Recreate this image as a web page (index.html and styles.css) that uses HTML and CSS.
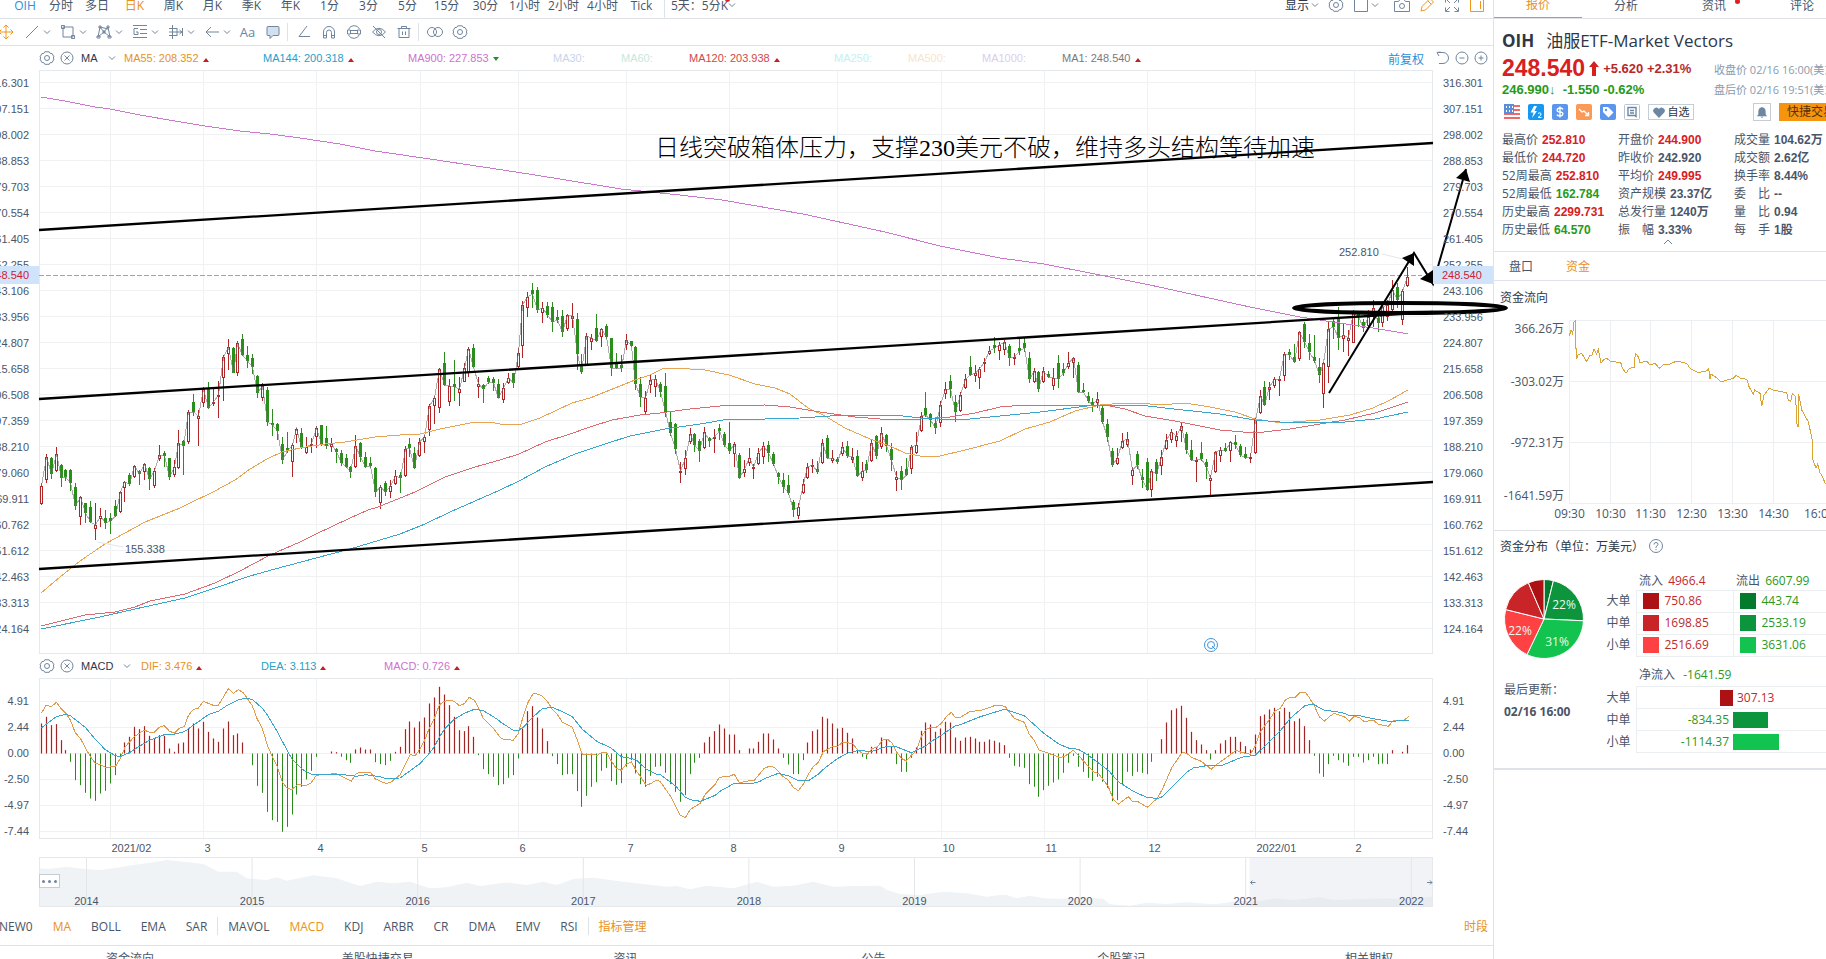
FILE: index.html
```html
<!DOCTYPE html>
<html lang="zh-CN">
<head>
    <meta charset="UTF-8">
    <meta name="viewport" content="width=device-width, initial-scale=1.0">
    <title>OIH 油服ETF-Market Vectors</title>
    <link rel="stylesheet" href="styles.css">
</head>
<body>
    <!-- shared icons -->
    <svg class="sprite" aria-hidden="true">
        <symbol id="i-chev" viewBox="0 0 8 8"><path d="M1 2.5l3 3 3-3"/></symbol>
        <symbol id="i-gear" viewBox="0 0 16 16"><path d="M5.8 1.8h4.4l1 1.6 1.9.2 1.9 3.3-.8 1.1.8 1.1-1.9 3.4-1.9.2-1 1.6H5.8l-1-1.6-1.9-.2L1 9.100l.8-1.100L1 6.900l1.900-3.300 1.900-.2z"/><circle cx="8" cy="8" r="2.500"/></symbol>
        <symbol id="i-close" viewBox="0 0 16 16"><circle cx="8" cy="8" r="6"/><path d="M5.500 5.500l5 5m0-5l-5 5"/></symbol>
        <symbol id="i-move" viewBox="0 0 16 16"><path d="M8 1v14M1 8h14M5.500 3.500L8 1l2.500 2.500M5.500 12.500L8 15l2.500-2.500M3.500 5.500L1 8l2.500 2.500M12.500 5.500L15 8l-2.500 2.500"/></symbol>
        <symbol id="i-line" viewBox="0 0 16 16"><path d="M2 14L14 2"/></symbol>
        <symbol id="i-rect" viewBox="0 0 16 16"><path d="M3 3h10v10H3zM1.500 1.500h3v3h-3zM11.500 11.500h3v3h-3z"/></symbol>
        <symbol id="i-pattern" viewBox="0 0 16 16"><path d="M2 13L4 3l4 5 4-5 2 10-6-5zM4 3l8 2M1 12h3v2H1zM12 12h3v2h-3zM3 2h2v2H3zM11 2h2v2h-2zM7 7h2v2H7z"/></symbol>
        <symbol id="i-fib" viewBox="0 0 16 16"><path d="M1 1.500h14M8 5.500h7M8 9.500h7M1 13.500h14M6 4.500H2v6h4V8H4"/></symbol>
        <symbol id="i-measure" viewBox="0 0 16 16"><path d="M4.500 1v14M1 4.500h8M1 11.500h8M14.500 4v8M1 8h13M11.500 6l2.500 2-2.500 2M9 4v8"/></symbol>
        <symbol id="i-arrow" viewBox="0 0 16 16"><path d="M15 8H2M7 3L2 8l5 5"/></symbol>
        <symbol id="i-note" viewBox="0 0 16 16"><path class="tint" d="M3 2.500h10q1 0 1 1v7q0 1-1 1H8l-3 3v-3H3q-1 0-1-1v-7q0-1 1-1z"/></symbol>
        <symbol id="i-angle" viewBox="0 0 16 16"><path d="M11 2L3 12.500h11"/></symbol>
        <symbol id="i-magnet" viewBox="0 0 16 16"><path d="M2.500 14V8a5.500 5.500 0 0111 0v6h-3V8.500a2.500 2.500 0 00-5 0V14zM2.500 11.500h3M10.500 11.500h3"/></symbol>
        <symbol id="i-sync" viewBox="0 0 16 16"><path d="M2.500 5.500A6 6 0 0113.500 5M13.500 10.500A6 6 0 012.500 11M5 6.500h6M5 9.500h6M1.500 6h3v4h-3zM11.500 6h3v4h-3z"/></symbol>
        <symbol id="i-hide" viewBox="0 0 16 16"><path d="M1.500 8Q8 .5 14.500 8 8 15.500 1.500 8zM2 2l12 12"/><circle cx="8" cy="8" r="2.500"/></symbol>
        <symbol id="i-trash" viewBox="0 0 16 16"><path d="M1.500 4.500h13M5.500 4.500v-2h5v2M3 4.500v9h10v-9M6.500 7.500v3.500M9.500 7.500v3.500"/></symbol>
        <symbol id="i-rings" viewBox="0 0 16 16"><circle cx="5" cy="8" r="4.500"/><circle cx="11" cy="8" r="4.500"/></symbol>
        <symbol id="i-square" viewBox="0 0 16 16"><path d="M1.500 1.500h13v13h-13z"/></symbol>
        <symbol id="i-camera" viewBox="0 0 16 16"><path d="M.5 4.500h4l1.500-2h4l1.500 2h4v10H.5z"/><circle cx="8" cy="9" r="2.500"/></symbol>
        <symbol id="i-pen" viewBox="0 0 16 16"><path d="M2 14l1-4.500L11 1.500l3.500 3.500-8 8zM9 4l3 3"/></symbol>
        <symbol id="i-full" viewBox="0 0 16 16"><path d="M1.500 5.500v-4h4M10.500 1.500h4v4M14.500 10.500v4h-4M5.500 14.500h-4v-4M2 2l4 4M14 2l-4 4M14 14l-4-4M2 14l4-4"/></symbol>
        <symbol id="i-side" viewBox="0 0 16 16"><path d="M1.500 1.500h13v13h-13zM11.500 4v8"/></symbol>
        <symbol id="i-undo" viewBox="0 0 16 16"><path d="M4 6L2 2.500 5.500 2M2.500 2.500H8a5.500 5.500 0 010 11H4"/></symbol>
        <symbol id="i-minus" viewBox="0 0 16 16"><circle cx="8" cy="8" r="6"/><path d="M5.500 8h5"/></symbol>
        <symbol id="i-plus" viewBox="0 0 16 16"><circle cx="8" cy="8" r="6"/><path d="M5.500 8h5M8 5.500v5"/></symbol>
    </svg>

    <div class="layout">
        <main class="main">
            <nav class="period-bar">
                <button class="short symbol">OIH</button>
                <button class="short">分时</button>
                <button class="short">多日</button>
                <button class="active">日K</button>
                <button>周K</button>
                <button>月K</button>
                <button>季K</button>
                <button>年K</button>
                <button>1分</button>
                <button>3分</button>
                <button>5分</button>
                <button>15分</button>
                <button>30分</button>
                <button>1小时</button>
                <button>2小时</button>
                <button>4小时</button>
                <button>Tick</button>
                <span class="sep"></span>
                <button class="custom">5天：5分K<svg class="chev"><use href="#i-chev"/></svg></button>
                <div class="period-tools">
                    <button class="dark">显示<svg class="chev"><use href="#i-chev"/></svg></button>
                    <button aria-label="设置"><svg class="icon"><use href="#i-gear"/></svg></button>
                    <button class="frames" aria-label="布局"><svg class="icon"><use href="#i-square"/></svg><svg class="chev"><use href="#i-chev"/></svg></button>
                    <button aria-label="截图"><svg class="icon"><use href="#i-camera"/></svg></button>
                    <button class="active" aria-label="画线"><svg class="icon"><use href="#i-pen"/></svg></button>
                    <button aria-label="全屏"><svg class="icon"><use href="#i-full"/></svg></button>
                    <button class="active" aria-label="侧栏"><svg class="icon"><use href="#i-side"/></svg></button>
                </div>
            </nav>

            <div class="draw-bar">
                <button class="active" aria-label="移动"><svg class="icon"><use href="#i-move"/></svg></button>
                <button class="drop" aria-label="线段"><svg class="icon"><use href="#i-line"/></svg><svg class="chev"><use href="#i-chev"/></svg></button>
                <button class="drop" aria-label="矩形"><svg class="icon"><use href="#i-rect"/></svg><svg class="chev"><use href="#i-chev"/></svg></button>
                <button class="drop" aria-label="形态"><svg class="icon"><use href="#i-pattern"/></svg><svg class="chev"><use href="#i-chev"/></svg></button>
                <button class="drop" aria-label="江恩"><svg class="icon"><use href="#i-fib"/></svg><svg class="chev"><use href="#i-chev"/></svg></button>
                <button class="drop" aria-label="测量"><svg class="icon"><use href="#i-measure"/></svg><svg class="chev"><use href="#i-chev"/></svg></button>
                <button class="drop" aria-label="箭头"><svg class="icon"><use href="#i-arrow"/></svg><svg class="chev"><use href="#i-chev"/></svg></button>
                <button class="text-tool">Aa</button>
                <button aria-label="注释"><svg class="icon"><use href="#i-note"/></svg></button>
                <span class="sep"></span>
                <button aria-label="角度"><svg class="icon"><use href="#i-angle"/></svg></button>
                <button aria-label="磁铁"><svg class="icon"><use href="#i-magnet"/></svg></button>
                <button aria-label="同步"><svg class="icon"><use href="#i-sync"/></svg></button>
                <button aria-label="隐藏"><svg class="icon"><use href="#i-hide"/></svg></button>
                <button aria-label="删除"><svg class="icon"><use href="#i-trash"/></svg></button>
                <span class="sep"></span>
                <button aria-label="对比"><svg class="icon"><use href="#i-rings"/></svg></button>
                <button aria-label="设置"><svg class="icon"><use href="#i-gear"/></svg></button>
            </div>

            <div class="legend">
                <div class="legend-name">
                    <svg class="icon"><use href="#i-gear"/></svg>
                    <svg class="icon"><use href="#i-close"/></svg>
                    <span>MA</span>
                    <svg class="chev"><use href="#i-chev"/></svg>
                </div>
                <div class="legend-values ma">
                    <span class="c-orange up">MA55: 208.352</span>
                    <span class="c-blue up">MA144: 200.318</span>
                    <span class="c-pink down">MA900: 227.853</span>
                    <span class="c-pale1">MA30:</span>
                    <span class="c-pale2">MA60:</span>
                    <span class="c-red up">MA120: 203.938</span>
                    <span class="c-pale3">MA250:</span>
                    <span class="c-pale4">MA500:</span>
                    <span class="c-pale5">MA1000:</span>
                    <span class="c-grey up">MA1: 248.540</span>
                </div>
                <div class="legend-tools">
                    <a href="#">前复权</a>
                    <svg class="icon"><use href="#i-undo"/></svg>
                    <svg class="icon"><use href="#i-minus"/></svg>
                    <svg class="icon"><use href="#i-plus"/></svg>
                </div>
            </div>

            <div class="chart-row">
                <div class="axis left" id="axisLeft"></div>
                <div class="plot">
                    <svg id="kline" class="kline"></svg>
                    <svg id="notes" class="notes"></svg>
                </div>
                <div class="axis right" id="axisRight"></div>
            </div>

            <div class="legend">
                <div class="legend-name sub">
                    <svg class="icon"><use href="#i-gear"/></svg>
                    <svg class="icon"><use href="#i-close"/></svg>
                    <span>MACD</span>
                    <svg class="chev"><use href="#i-chev"/></svg>
                </div>
                <div class="legend-values macd">
                    <span class="c-orange up">DIF: 3.476</span>
                    <span class="c-blue up">DEA: 3.113</span>
                    <span class="c-pink up">MACD: 0.726</span>
                </div>
            </div>

            <div class="chart-row">
                <div class="axis left macd-axis">
                    <span>4.91</span><span>2.44</span><span>0.00</span><span>-2.50</span><span>-4.97</span><span>-7.44</span>
                </div>
                <div class="plot"><svg id="macd" class="macd-svg"></svg></div>
                <div class="axis right macd-axis">
                    <span>4.91</span><span>2.44</span><span>0.00</span><span>-2.50</span><span>-4.97</span><span>-7.44</span>
                </div>
            </div>

            <div class="chart-row">
                <div class="axis"></div>
                <div class="plot">
                    <svg id="range" class="range"></svg>
                    <button class="more" aria-label="更多"><i></i><i></i><i></i></button>
                </div>
                <div class="axis right"></div>
            </div>

            <nav class="indicator-bar">
                <button>NEW0</button>
                <button class="active">MA</button>
                <button>BOLL</button>
                <button>EMA</button>
                <button>SAR</button>
                <span class="sep"></span>
                <button>MAVOL</button>
                <button class="active">MACD</button>
                <button>KDJ</button>
                <button>ARBR</button>
                <button>CR</button>
                <button>DMA</button>
                <button>EMV</button>
                <button>RSI</button>
                <span class="sep"></span>
                <button class="active">指标管理</button>
                <button class="active last">时段</button>
            </nav>

            <nav class="bottom-bar">
                <button>资金流向</button>
                <button>美股快捷交易</button>
                <button>资讯</button>
                <button>公告</button>
                <button>个股笔记</button>
                <button>相关期权</button>
            </nav>
        </main>

        <aside class="side">
            <nav class="side-tabs">
                <button class="active">报价</button>
                <button>分析</button>
                <button class="dot">资讯</button>
                <button>评论</button>
            </nav>

            <section class="quote">
                <h1><b>OIH</b>油服ETF-Market Vectors</h1>
                <div class="price-row">
                    <div class="price">248.540<svg class="up-arrow" viewBox="0 0 10 15"><path d="M5 0l5 6H7v9H3V6H0z"/></svg><span>+5.620 +2.31%</span></div>
                    <div class="when">收盘价 02/16 16:00(美东)</div>
                </div>
                <div class="price-row after">
                    <div class="after-price">246.990↓&nbsp; -1.550 -0.62%</div>
                    <div class="when">盘后价 02/16 19:51(美东)</div>
                </div>
                <div class="badges">
                    <svg viewBox="0 0 16 16"><path d="M0 1h16v2H0zM0 5h16v2H0zM0 9h16v2H0zM0 13h16v2H0z" fill="#f0686a"/><path d="M0 0h10v10H0z" fill="#5a8fd8"/><path d="M2 2h1v2H2zM5 2h1v2H5zM8 2h1v2H8zM2 6h1v2H2zM5 6h1v2H5zM8 6h1v2H8z" fill="#fff"/></svg>
                    <svg viewBox="0 0 16 16"><rect width="16" height="16" rx="2" fill="#1698f0"/><path d="M6 2L2.500 8.500h3L4 14l5-7H6.500L9 2z" fill="#fff"/><path d="M10 9.500q2-1.500 3 0t-3 4h3.500" fill="none" stroke="#fff"/></svg>
                    <svg viewBox="0 0 16 16"><rect width="16" height="16" rx="2" fill="#5a96ee"/><path d="M11 5.500Q10.500 4 8 4T5.200 6 8 8t2.800 2T8 12 5 10.500M8 2.500v11" fill="none" stroke="#fff" stroke-width="1.400"/></svg>
                    <svg viewBox="0 0 16 16"><rect width="16" height="16" rx="2" fill="#fb9a58"/><path d="M3 5l3 3 2-1 4 4M12.500 8v3.500H9" fill="none" stroke="#fff" stroke-width="1.400"/></svg>
                    <svg viewBox="0 0 16 16"><rect width="16" height="16" rx="2" fill="#5a96ee"/><path d="M3 3h5l5.500 5.500-5 5L3 8z" fill="#fff"/><circle cx="6" cy="6" r="1.200" fill="#5a96ee"/></svg>
                    <svg viewBox="0 0 16 16"><rect x=".5" y=".5" width="15" height="15" rx="1" fill="#fff" stroke="#b9c5d3"/><path d="M4 3.500h8v9l-1.500-1H4zM6 6.500h4M6 9h4" fill="none" stroke="#6b87a3" stroke-width="1.400"/></svg>
                    <button class="fav"><svg viewBox="0 0 12 11"><path d="M6 11L.8 5.600A3 3 0 016 2a3 3 0 015.200 3.600z"/></svg>自选</button>
                    <button class="bell" aria-label="提醒"><svg viewBox="0 0 12 12"><path d="M6 0q4 1 4 5v3l1.500 2H.5L2 8V5q0-4 4-5zM4.500 10.500h3L6 12z"/></svg></button>
                    <button class="trade">快捷交易</button>
                </div>
                <dl class="stats">
                    <div><dt>最高价</dt><dd class="red">252.810</dd></div>
                    <div><dt>开盘价</dt><dd class="red">244.900</dd></div>
                    <div><dt>成交量</dt><dd>104.62万</dd></div>
                    <div><dt>最低价</dt><dd class="red">244.720</dd></div>
                    <div><dt>昨收价</dt><dd>242.920</dd></div>
                    <div><dt>成交额</dt><dd>2.62亿</dd></div>
                    <div><dt>52周最高</dt><dd class="red">252.810</dd></div>
                    <div><dt>平均价</dt><dd class="red">249.995</dd></div>
                    <div><dt>换手率</dt><dd>8.44%</dd></div>
                    <div><dt>52周最低</dt><dd class="green">162.784</dd></div>
                    <div><dt>资产规模</dt><dd>23.37亿</dd></div>
                    <div><dt>委　比</dt><dd>--</dd></div>
                    <div><dt>历史最高</dt><dd class="red">2299.731</dd></div>
                    <div><dt>总发行量</dt><dd>1240万</dd></div>
                    <div><dt>量　比</dt><dd>0.94</dd></div>
                    <div><dt>历史最低</dt><dd class="green">64.570</dd></div>
                    <div><dt>振　幅</dt><dd>3.33%</dd></div>
                    <div><dt>每　手</dt><dd>1股</dd></div>
                </dl>
                <button class="fold" aria-label="收起"><svg viewBox="0 0 10 6"><path d="M1 5l4-4 4 4"/></svg></button>
            </section>

            <nav class="sub-tabs">
                <button>盘口</button>
                <button class="active">资金</button>
            </nav>

            <section class="flow">
                <h2>资金流向</h2>
                <svg id="flow" class="flow-svg"></svg>
            </section>

            <section class="spread">
                <h2>资金分布（单位：万美元）<svg class="help" viewBox="0 0 16 16"><circle cx="8" cy="8" r="6.500"/><path d="M6 6.500Q6 4.500 8 4.500t2 1.800Q10 7.500 8 8.700V10M8 11v1.200"/></svg></h2>
                <div class="spread-body">
                    <div class="spread-left">
                        <svg id="pie" class="pie" viewBox="-40 -40 80 80"></svg>
                        <p>最后更新：</p>
                        <p><b>02/16 16:00</b></p>
                    </div>
                    <div>
                        <table>
                            <colgroup><col class="name"><col><col></colgroup>
                            <thead>
                                <tr><th></th><th>流入 <span class="num-red">4966.4</span></th><th>流出 <span class="num-green">6607.99</span></th></tr>
                            </thead>
                            <tbody>
                                <tr><th>大单</th><td class="num-red"><i class="sw r1"></i>750.86</td><td class="num-green"><i class="sw g1"></i>443.74</td></tr>
                                <tr><th>中单</th><td class="num-red"><i class="sw r2"></i>1698.85</td><td class="num-green"><i class="sw g2"></i>2533.19</td></tr>
                                <tr><th>小单</th><td class="num-red"><i class="sw r3"></i>2516.69</td><td class="num-green"><i class="sw g3"></i>3631.06</td></tr>
                            </tbody>
                        </table>
                        <table class="net">
                            <colgroup><col class="name"><col><col></colgroup>
                            <thead>
                                <tr><th></th><th colspan="2">净流入 <span class="num-green">&nbsp;-1641.59</span></th></tr>
                            </thead>
                            <tbody>
                                <tr><th>大单</th><td class="neg"><i class="bar r1" style="width:14%"></i></td><td class="pos num-red"><span>307.13</span></td></tr>
                                <tr><th>中单</th><td class="neg num-green"><span>-834.35</span></td><td class="pos"><i class="bar g2" style="width:36%"></i></td></tr>
                                <tr><th>小单</th><td class="neg num-green"><span>-1114.37</span></td><td class="pos"><i class="bar g3" style="width:48%"></i></td></tr>
                            </tbody>
                        </table>
                    </div>
                </div>
            </section>
        </aside>
    </div>
    <script src="chart.js"></script>
</body>
</html>
```
FILE: styles.css
```css
* {
    box-sizing: border-box;
}

body {
    margin: 0;
    height: 100vh;
    overflow: hidden;
    background: #fff;
    color: #4a5568;
    font-family: "Open Sans", "Noto Sans CJK SC", sans-serif;
    font-size: 12px;
}

button {
    border: none;
    background: none;
    padding: 0;
    color: inherit;
    font: inherit;
    white-space: nowrap;
    cursor: pointer;
}

.sprite {
    display: none;
}

.layout {
    display: grid;
    grid-template-columns: minmax(0, 1fr) 333px;
    height: 100%;
}

.main {
    position: relative;
    z-index: 1;
    min-width: 0;
}

/* icons */
.icon,
.chev {
    flex: none;
    width: 16px;
    height: 16px;
    fill: none;
    stroke: #71859c;
}

.chev {
    width: 8px;
    height: 8px;
}

.tint {
    fill: #d3e0ef;
}

.active {
    color: #e8921c;
}

.active .icon {
    stroke: #f0961e;
}

.sep {
    flex: none;
    width: 1px;
    height: 18px;
    background: #dde2e8;
}

/* top period bar */
.period-bar {
    display: flex;
    align-items: flex-end;
    height: 19px;
    padding-left: 7px;
    border-bottom: 1px solid #dfe3e7;
    overflow: hidden;
}

.period-bar button {
    display: flex;
    justify-content: center;
    align-items: center;
    width: 39px;
    height: 26px;
}

.period-bar .short {
    width: 36px;
}

.period-bar .symbol {
    color: #2b8fd8;
}

.period-bar .custom {
    width: auto;
    margin-left: 6px;
}

.period-bar .sep {
    margin-left: 3px;
}

.period-tools {
    display: flex;
    align-items: center;
    gap: 9px;
    margin-left: auto;
    padding-right: 8px;
}

.period-tools button {
    width: auto;
    gap: 2px;
}

.period-tools .frames {
    margin-right: 6px;
}

.period-tools .dark {
    color: #2d3748;
}

/* drawing toolbar */
.draw-bar {
    display: flex;
    align-items: center;
    height: 27px;
    margin-left: -7px;
    border-bottom: 1px solid #dfe3e7;
}

.draw-bar button {
    display: flex;
    justify-content: center;
    align-items: center;
    width: 25px;
    height: 24px;
}

.draw-bar .drop {
    width: 36px;
    gap: 3px;
}

.draw-bar .active {
    margin-right: 1px;
}

.draw-bar .text-tool {
    color: #71859c;
    font-size: 13px;
}

.draw-bar .sep {
    margin: 0 3px 0 2px;
}

/* indicator legends */
.legend {
    display: flex;
    align-items: center;
    height: 24px;
    padding-left: 39px;
    font-family: "Liberation Sans", "Noto Sans CJK SC", sans-serif;
    font-size: 11px;
}

.legend-name {
    display: flex;
    align-items: center;
    gap: 4px;
    width: 85px;
    color: #2d3748;
}

.legend-name .chev {
    margin-left: 6px;
}

.legend-name span {
    margin-left: 2px;
}

.legend-name.sub {
    width: 102px;
}

.legend-values {
    display: grid;
    flex: 1;
    white-space: nowrap;
}

.legend-values.ma {
    grid-template-columns: 139px 145px 145px 68px 68px 145px 74px 74px 80px auto;
}

.legend-values.macd {
    grid-template-columns: 120px 123px auto;
}

.up::after,
.down::after {
    content: "";
    display: inline-block;
    margin-left: 4px;
    border: 3px solid transparent;
    border-top: none;
    border-bottom: 4px solid #c22020;
}

.down::after {
    border-bottom: none;
    border-top: 4px solid #259225;
    margin-bottom: 1px;
}

.legend-tools {
    display: flex;
    align-items: center;
    gap: 3px;
    padding-right: 4px;
}

.legend-tools a {
    margin-right: 8px;
    color: #2b8fd8;
    font-size: 12px;
    text-decoration: none;
}

.c-orange { color: #e8921c; }
.c-blue { color: #25a0c8; }
.c-pink { color: #d070d0; }
.c-red { color: #d04848; }
.c-grey { color: #7a7a7a; }
.c-pale1 { color: #c8d4ec; }
.c-pale2 { color: #c8e8d8; }
.c-pale3 { color: #c4f0f0; }
.c-pale4 { color: #fae4c8; }
.c-pale5 { color: #dccdec; }

/* charts */
.chart-row {
    display: grid;
    grid-template-columns: 39px minmax(0, 1fr) 60px;
}

.plot {
    position: relative;
}

.plot svg {
    display: block;
    width: 100%;
}

.plot polyline,
.flow-svg polyline {
    shape-rendering: crispEdges;
}

.plot .notes polyline {
    shape-rendering: auto;
}

.kline {
    height: 584px;
}

.plot .notes {
    position: absolute;
    top: 0;
    left: 0;
    height: 584px;
    overflow: visible;
    pointer-events: none;
}

.macd-svg {
    height: 179px;
}

.range {
    height: 50px;
}

.chart-row text,
.axis {
    font-family: "Liberation Sans", sans-serif;
    font-size: 11px;
    fill: #4a5568;
}

.axis {
    position: relative;
    display: flex;
    flex-direction: column;
    line-height: 26px;
}

.axis.left {
    align-items: flex-end;
    padding-right: 10px;
}

.axis.right {
    padding-left: 10px;
}

.axis .now {
    position: absolute;
    top: 196px;
    right: 0;
    left: 0;
    display: flex;
    height: 18px;
    background: #cfe3fa;
    color: #d02030;
    line-height: 18px;
}

.axis.left .now {
    justify-content: flex-end;
    padding-right: 10px;
}

.axis.right .now {
    padding-left: 9px;
}

.macd-axis {
    padding-top: 10px;
}

.plot .note-text {
    font-family: "Liberation Serif", "Noto Sans CJK SC", serif;
    font-size: 24px;
    font-weight: 300;
    fill: #000;
}

.note-text tspan {
    font-weight: 400;
}

.more {
    position: absolute;
    top: 17px;
    left: 0;
    display: flex;
    justify-content: center;
    align-items: center;
    gap: 3px;
    width: 21px;
    height: 14px;
    border: 1px solid #c3ced8;
    background: #fff;
}

.more i {
    width: 3px;
    height: 3px;
    border-radius: 50%;
    background: #71859c;
}

/* bars under the charts */
.indicator-bar {
    display: flex;
    align-items: center;
    height: 39px;
    margin-left: -11px;
    border-bottom: 1px solid #dfe3e7;
}

.indicator-bar button {
    padding: 0 10px;
}

.indicator-bar .last {
    margin-left: auto;
    padding-right: 5px;
}

.bottom-bar {
    display: flex;
    height: 24px;
    padding-left: 6px;
}

.bottom-bar button {
    flex: 1;
}

/* right panel */
.side {
    border-left: 1px solid #dfe3e7;
    overflow: hidden;
    white-space: nowrap;
}

.side-tabs {
    display: flex;
    align-items: flex-end;
    height: 19px;
    overflow: hidden;
    border-bottom: 1px solid #dfe3e7;
}

.side-tabs button {
    flex: 0 0 88px;
    height: 26px;
    line-height: 25px;
}

.side-tabs .active {
    border-bottom: 1px solid #e8921c;
}

.side-tabs .dot,
.period-bar .custom {
    position: relative;
}

.side-tabs .dot::after,
.period-bar .custom::after {
    content: "";
    position: absolute;
    top: 7px;
    right: 18px;
    width: 5px;
    height: 5px;
    border-radius: 50%;
    background: #e02020;
}

.period-bar .custom::after {
    top: 5px;
    right: 6px;
}

.quote {
    padding: 8px 0 0 8px;
    border-bottom: 1px solid #dfe3e7;
}

.quote h1 {
    margin: 0;
    color: #2d3748;
    font-size: 17px;
    font-weight: 400;
    line-height: 28px;
}

.quote h1 b {
    margin-right: 12px;
}

.price-row {
    display: grid;
    grid-template-columns: 212px auto;
    align-items: center;
    height: 24px;
}

.price-row.after {
    height: 20px;
}

.price,
.after-price {
    display: flex;
    align-items: center;
    color: #d8201e;
    font-family: "Liberation Sans", sans-serif;
    font-size: 23px;
    font-weight: bold;
}

.price span {
    margin-left: 4px;
    color: #b82828;
    font-size: 13px;
}

.up-arrow {
    width: 10px;
    height: 15px;
    margin-left: 4px;
    fill: #d8201e;
}

.after-price {
    color: #259a18;
    font-size: 13px;
}

.when {
    color: #8a9aad;
    font-size: 11px;
}

.badges {
    display: flex;
    align-items: center;
    gap: 8px;
    height: 26px;
    padding-left: 2px;
}

.badges > svg {
    flex: none;
    width: 16px;
    height: 16px;
}

.fav,
.bell {
    display: flex;
    flex: none;
    justify-content: center;
    align-items: center;
    gap: 3px;
    width: 46px;
    height: 16px;
    border: 1px solid #c3ced8;
    color: #2d3748;
    font-size: 11px;
    line-height: 14px;
}

.fav svg,
.bell svg {
    width: 12px;
    height: 11px;
    fill: #6b87a3;
}

.bell {
    width: 18px;
    height: 18px;
    margin-left: 51px;
}

.trade {
    flex: none;
    width: 64px;
    height: 18px;
    background: #f5940f;
    color: #5a3005;
    line-height: 18px;
}

.stats {
    display: grid;
    grid-template-columns: repeat(3, 116px);
    margin: 0;
    padding-top: 6px;
    line-height: 18px;
}

.stats div {
    display: flex;
    gap: 4px;
    height: 18px;
}

.stats dd {
    margin: 0;
    font-family: "Liberation Sans", "Noto Sans CJK SC", sans-serif;
    font-weight: bold;
}

.stats .red {
    color: #d8201e;
}

.stats .green {
    color: #259a18;
}

.fold {
    display: flex;
    width: 10px;
    height: 12px;
    margin-left: 161px;
}

.fold svg {
    width: 10px;
    height: 6px;
    fill: none;
    stroke: #71859c;
}

.sub-tabs {
    display: flex;
    gap: 33px;
    height: 29px;
    padding-left: 15px;
    border-bottom: 1px solid #dfe3e7;
}

.side h2 {
    display: flex;
    align-items: center;
    height: 32px;
    margin: 0;
    padding-left: 6px;
    color: #2d3748;
    font-size: 12px;
    font-weight: 400;
}

.flow-svg {
    display: block;
    width: 100%;
    height: 217px;
    font-size: 12px;
    fill: #4a5568;
}

.spread {
    padding-bottom: 15px;
    border-top: 1px solid #dfe3e7;
    border-bottom: 2px solid #dfe3e7;
}

.side .spread h2 {
    height: 30px;
}

.help {
    width: 16px;
    height: 16px;
    margin-left: 4px;
    fill: none;
    stroke: #71859c;
}

.spread-body {
    display: grid;
    grid-template-columns: 100px 236px;
    padding-top: 11px;
}

.spread-left {
    padding: 7px 0 0 10px;
}

.spread-left p {
    margin: 0;
    line-height: 22px;
}

.pie {
    display: block;
    width: 80px;
    height: 80px;
    margin-bottom: 20px;
}

.pie text {
    fill: #eafaea;
    font-size: 12px;
    text-anchor: middle;
}

.spread table {
    width: 236px;
    border-collapse: collapse;
    table-layout: fixed;
}

.spread col {
    width: 97px;
}

.spread .name {
    width: 42px;
}

.spread thead tr {
    height: 18px;
}

.spread tbody tr {
    height: 22px;
}

.spread th,
.spread td {
    padding: 0;
    font-weight: 400;
    line-height: 16px;
    text-align: left;
}

.spread tbody th {
    padding-right: 5px;
    text-align: right;
}

.spread thead th {
    padding-left: 3px;
}

.spread td {
    padding-left: 6px;
    border: 1px solid #eceff2;
}

.spread thead span {
    margin-left: 2px;
}

.spread .net {
    margin-top: 8px;
}

.net thead tr {
    height: 22px;
}

.net .neg {
    padding: 0;
    border-right: none;
    text-align: right;
}

.net .pos {
    padding: 0;
    border-left: none;
}

.net td span {
    padding: 0 4px;
}

.sw,
.bar {
    display: inline-block;
    width: 16px;
    height: 16px;
    margin-right: 6px;
    vertical-align: middle;
}

.bar {
    margin: 0;
}

.num-red {
    color: #c02a2e;
}

.num-green {
    color: #2c981c;
}

.r1 { background: #ac1114; }
.r2 { background: #c92428; }
.r3 { background: #fe4244; }
.g1 { background: #047a2c; }
.g2 { background: #0c953c; }
.g3 { background: #13c350; }
```
FILE: chart.js
```js
const LEFT = 39, BOARD = 1394, TOP = 70;
const STEP = 4.914;
const MONTHS = [[110.5, '2021/02'], [203.5, '3'], [316.5, '4'], [420.5, '5'], [518.5, '6'], [626.5, '7'], [729.5, '8'],
    [837.5, '9'], [941.5, '10'], [1044.5, '11'], [1147.5, '12'], [1255.5, '2022/01'], [1354.5, '2']];

// u = up, d = down, then high, body top, body bottom, low (px below the 260 line)
const CANDLES = `u223,226,244,245 u194,197,220,223 d197,198,214,219 u187,194,211,212 d204,205,218,227 d209,210,217,221
d209,210,223,231 d223,227,246,250 u236,237,257,265 d243,243,253,263 d241,247,262,263 u243,265,269,280
u248,256,259,267 d250,258,263,269 d253,258,261,274 d240,246,256,257 u231,232,252,253 u221,222,228,242
d213,215,224,226 u205,206,217,218 d210,211,214,225 u203,204,212,220 d207,208,219,230 u208,211,226,228
u185,195,199,201 d191,193,196,207 d198,198,217,220 u200,207,215,217 u170,183,208,209 d180,181,186,215
u150,152,182,184 d134,142,152,156 u150,156,159,186 u127,129,143,147 d122,129,148,149 u128,142,144,146
u121,135,136,158 u95,97,118,141 u79,87,94,110 d87,88,113,113 u81,83,113,116 d74,79,95,96
d86,95,101,108 d94,98,107,114 d115,116,133,138 u123,126,138,141 d127,130,162,166 d149,163,165,176
d163,164,171,180 d177,184,200,204 d172,188,191,193 u183,185,202,217 u168,169,175,183 d168,173,187,189
u177,187,193,194 u178,184,186,193 u166,168,177,188 d165,165,184,186 d166,178,186,189 u178,184,187,192
d188,189,192,203 d190,193,203,206 d194,198,207,208 d206,207,212,218 u175,186,207,208 d182,183,197,202
d192,197,207,208 d197,203,206,208 d207,208,232,237 u225,227,243,249 d221,223,232,236 u220,226,232,238
u210,216,224,225 d212,215,218,233 u186,189,216,217 d178,184,188,197 d187,193,208,209 u178,182,196,197
u175,177,182,193 u144,146,170,176 u136,138,146,164 u108,109,148,153 d92,103,125,126 u119,126,142,146
d100,124,127,141 u117,129,133,146 u103,108,122,122 u87,89,113,117 d84,88,107,108 u117,124,127,138
d124,125,129,143 d116,118,122,124 d117,119,123,131 d119,124,138,138 u123,128,140,143 u113,118,123,124
d113,113,123,128 u88,93,107,108 u41,45,86,98 u32,37,48,57 d23,30,34,48 d27,30,50,53
u42,48,53,63 d42,46,55,58 d42,47,62,72 d50,57,60,63 d50,56,72,77 u54,55,69,71
u43,56,59,68 d53,59,94,110 d94,106,112,114 u73,76,105,106 u74,78,82,90 d54,68,81,82
u68,69,77,87 d64,66,77,79 d78,78,108,116 d93,103,108,109 d95,105,108,112 u74,80,85,90
d81,81,86,87 d86,87,124,130 d117,124,137,147 u131,138,152,154 u114,120,125,133 u115,119,127,137
d122,124,132,137 d113,126,152,157 d152,162,173,176 d163,164,189,194 u202,211,213,223 u190,198,209,215
u168,174,182,184 d173,174,185,192 d179,181,191,202 u167,172,188,189 d177,178,181,187 u169,177,179,193
d164,168,171,180 d172,174,185,187 d162,183,191,194 u182,184,194,207 d193,195,218,219 u200,209,213,217
u188,198,203,206 u204,207,209,219 u188,193,204,205 u182,186,197,204 d181,185,193,202 d192,194,204,206
d212,213,217,224 d213,220,227,233 d215,225,233,235 d240,242,250,257 u243,247,256,259 u219,224,233,234
u203,207,218,219 u199,205,207,213 d201,209,212,214 u179,183,203,204 d175,178,198,199 u190,198,201,203
d197,199,202,204 u182,187,194,196 d181,186,196,198 u188,197,200,203 d190,196,216,217 u202,211,218,221
d200,204,210,213 u179,183,201,202 d175,176,196,199 u167,173,187,189 d174,175,186,192 d183,189,200,211
u211,217,220,231 d206,211,220,230 d198,209,215,216 u185,187,209,214 u172,185,193,194 u152,156,171,172
d132,148,155,157 d153,154,160,167 d157,163,168,174 u141,145,163,167 u122,129,134,139 d115,121,129,138
d135,142,152,162 u132,135,151,152 u114,119,128,129 d96,107,115,116 u105,113,116,122 u107,109,118,129
u98,102,103,112 u86,91,94,95 d77,85,88,93 u82,85,91,100 u80,82,90,95 d84,86,98,106
u93,97,99,105 d78,88,91,95 d78,83,88,92 d92,98,119,123 u108,111,122,123 d111,112,129,132
u107,111,122,123 d111,114,117,118 u108,118,126,130 d95,103,119,128 d103,109,113,116 u92,103,107,109
u97,98,103,118 d102,105,132,133 d123,130,132,133 d132,136,141,143 d138,142,145,152 u132,139,143,148
d145,148,162,164 d159,164,177,182 d188,191,205,207 u188,198,204,205 u173,181,188,189 u172,179,185,187
u207,210,216,225 d191,194,205,209 d209,217,220,228 d198,202,230,231 u209,211,230,237 d199,202,214,221
u190,197,206,215 u174,180,189,190 u169,172,180,183 u171,176,181,187 u163,166,171,182 d172,174,190,194
d180,190,200,201 u197,200,202,222 d182,193,199,201 d199,202,207,219 u215,218,221,235 u191,192,212,213
u187,190,196,202 d183,188,191,192 u181,182,191,202 d175,182,185,189 d184,186,195,197 d187,194,198,199
u193,197,199,203 u158,160,193,194 u130,136,153,154 d121,127,145,146 u122,127,130,140 u117,119,126,128
u116,119,121,136 u92,94,116,121 d89,92,95,100 d84,97,102,103 u71,72,99,101 d62,64,82,88
d74,83,92,100 d75,97,101,103 d98,107,115,123 u102,103,134,148 u62,69,107,123 d57,61,67,79
d47,58,78,90 u64,75,79,92 u70,78,81,96 u50,53,83,83 d52,54,57,67 d59,62,68,72
u50,57,66,67 u40,48,55,67 d52,58,63,72 u45,47,63,67 u40,45,57,61 u20,30,50,51
d23,27,40,48 u29,31,60,65 u7,17,26,27`.split(/\s+/);

const MA900 = '41,97 65,101 95,107 110,109 140,115 175,121 205,126 240,131 270,134 300,138 340,144 375,151 430,159 516,172 560,179 621,189 680,195 722,200 803,214 885,232 940,246 1000,258 1044,264 1100,275 1150,285 1200,296 1250,307 1300,317 1333,322 1373,328 1403,333 1408,333';
const MA55 = '41,593 60,577 80,561 105,544 125,533 145,522 165,514 180,508 190,503 213,492 235,480 250,469 267,459 282,452 300,448 325,444 345,442 375,437 400,435 420,434 440,429 470,423 490,422 500,424 519,425 540,418 572,403 590,398 615,388 635,380 650,375 662,369 672,368 690,369 705,370 729,375 755,384 775,388 790,394 808,408 825,416 845,428 870,439 890,446 905,453 920,456 936,457 965,450 1000,441 1025,429 1050,422 1075,411 1100,405 1125,403 1140,403 1160,405 1185,403 1210,407 1235,412 1255,419 1275,422 1293,422 1320,420 1350,415 1373,408 1390,400 1408,390';
const MA120 = '41,626 85,615 115,612 135,607 150,601 185,594 215,583 240,571 270,555 300,542 316,534 350,518 368,510 378,507 415,492 445,477 475,467 500,460 519,454 545,442 570,434 590,427 612,420 640,415 660,413 690,409 720,406 765,405 790,407 820,412 855,417 880,419 920,419 950,417 975,413 1000,407 1025,405 1105,405 1125,409 1145,416 1175,421 1200,426 1220,430 1255,433 1290,429 1320,424 1345,420 1375,413 1408,402';
const MA144 = '41,629 100,617 135,609 185,598 215,588 250,576 275,569 316,558 350,549 370,543 400,534 425,524 450,512 475,501 500,490 519,481 545,467 575,454 605,444 630,436 665,429 700,424 729,419 765,419 800,418 845,415 895,415 920,418 960,420 1000,416 1040,412 1095,405 1140,405 1165,408 1220,414 1255,420 1280,422 1345,422 1375,419 1408,412';

// MACD histogram, three units to a pixel
const HIST = [90, 110, 85, 88, 40, 10, -25, -80, -95, -118, -135, -142, -120, -112, -90, -65, -15, 33, 50, 80, 73, 82, 53, 45, 55, 53, 15, 5, 30, 33, 75, 90, 75, 95, 65, 45, 35, 75, 96, 55, 60, 33, 0, -35, -97, -118, -175, -200, -205, -235, -220, -183, -123, -100, -78, -52, -10, 0, 0, 6, 4, -10, -20, -28, 12, 18, 12, 12, -26, -32, -35, -22, 5, 20, 73, 96, 78, 96, 108, 150, 168, 200, 177, 145, 110, 70, 67, 82, 50, -5, -47, -62, -70, -95,
    -92, -73, -65, -15, 75, 127, 142, 108, 75, 37, -8, -32, -65, -62, -62, -113, -160, -127, -100, -86, -52, -43, -83, -94, -89, -40, -20, -60, -92, -100, -67, -40, -38, -58, -92, -115, -145, -125, -62, -28, -13, 33, 50, 67, 87, 75, 57, 57, 10, 0, 15, 15, 35, 60, 60, 42, 15, -13, -33, -62, -62, -20, 33, 67, 72, 110, 105, 90, 75, 77, 62, 45, 10, -10, -17, 20, 20, 48, 42, 20, -32, -55, -55, -13, 18, 68, 93, 87, 65, 75, 95, 93, 48, 38, 48, 50, 45, 35, 35, 42, 38,
    33, 25, -13, -37, -40, -43, -92, -100, -130, -110, -97, -87, -78, -58, -28, -7, -40, -55, -73, -82, -70, -85, -103, -143, -140, -95, -55, -67, -55, -58, -62, -25, 0, 43, 93, 130, 135, 143, 107, 65, 40, 27, 10, -18, 10, 30, 40, 50, 50, 35, 22, 12, 57, 112, 117, 132, 137, 127, 137, 125, 97, 105, 82, 40, -7, -60, -70, -32, -7, -20, -27, -37, -10, -10, -27, -20, -10, -32, -30, -32, 10, 0, 5, 25];

// each block of the lines below covers 1500 units (500px) of the board
const DIF = ['124,220 139,195 154,200 169,187 184,207 199,222 211,240 226,278 241,295 271,350 286,370 301,374 316,382 346,380 361,355 376,320 403,290 433,270 448,277 463,277 478,262 493,257 508,273 523,280 538,265 553,260 565,227 580,208 595,205 610,184 640,196 655,196 670,172 685,146 700,160 715,149 730,158 757,197 772,238 787,265 802,315 817,350 832,380 847,425 862,446 877,448 892,434 919,436 934,428 949,406 979,403 1009,401 1024,408 1054,424 1069,400 1084,397 1111,397 1126,417 1156,430 1171,428 1201,404 1231,344 1246,347 1261,325 1273,303 1288,265 1303,235 1318,195 1333,184 1348,181 1363,184 1378,197 1393,191 1408,172 1423,181 1438,208 1450,235 1480,265 1500,292',
    '10,297 40,301 55,280 70,228 85,185 100,160 115,163 127,169 142,184 157,208 172,223 187,247 202,254 217,262 232,300 247,343 277,343 292,346 304,338 319,337 334,363 349,385 364,391 379,373 394,365 409,392 439,436 454,430 469,420 481,425 511,468 541,526 556,533 571,508 601,490 616,463 646,433 658,412 688,409 703,403 718,428 748,422 763,421 778,403 793,385 808,379 823,382 850,410 865,420 880,442 895,452 910,433 925,403 940,380 955,367 970,335 1000,319 1012,320 1027,307 1057,310 1072,328 1087,340 1102,343 1117,325 1132,322 1147,301 1162,297 1177,310 1189,335 1204,355 1219,363 1234,346 1249,332 1264,290 1279,268 1294,262 1309,262 1324,250 1339,230 1354,217 1366,232 1381,232 1411,214 1441,212 1471,202 1486,196',
    '2,196 16,200 43,235 73,247 88,283 103,301 118,331 133,335 178,352 193,350 220,331 235,346 280,395 295,400 325,440 340,478 355,493 385,470 397,484 412,484 442,502 457,488 472,475 487,448 517,380 547,337 562,341 574,352 604,364 634,388 649,374 679,353 709,331 724,337 751,343 766,318 781,275 811,235 826,212 841,205 856,180 871,172 886,172 901,157 916,157 928,173 943,197 958,230 973,244 988,230 1003,220 1033,230 1048,244 1063,229 1078,233 1093,245 1120,240 1135,253 1165,259 1180,242 1210,242 1226,230'];
const DEA = ['124,264 169,230 199,223 211,227 256,262 286,298 316,329 346,347 361,350 388,338 418,319 448,301 493,284 523,283 553,275 580,256 625,224 655,214 685,194 715,179 735,175 757,178 787,205 802,225 832,275 862,332 877,358 907,388 934,403 1020,403 1069,409 1096,404 1141,410 1156,415 1200,414 1231,392 1261,370 1288,340 1303,320 1318,292 1333,268 1363,238 1393,220 1423,208 1450,212 1480,230 1499,243',
    '0,245 40,271 55,271 70,262 100,230 127,206 157,202 187,215 217,230 247,268 292,305 319,317 334,325 364,350 394,355 409,360 439,388 469,403 481,404 526,437 556,472 571,479 601,484 646,466 658,455 703,430 760,430 778,425 793,416 835,400 865,407 895,422 925,422 955,403 970,388 1012,356 1042,340 1072,332 1117,334 1162,319 1189,320 1234,338 1279,317 1294,304 1324,286 1366,257 1381,254 1441,230 1499,212',
    '2,211 16,208 43,217 73,227 103,254 133,281 178,313 208,325 235,328 265,346 325,391 355,425 397,452 442,473 475,475 487,470 532,425 562,395 580,384 619,377 664,377 724,352 766,346 811,302 841,272 871,235 916,196 940,193 973,211 1003,214 1033,220 1048,227 1078,227 1120,236 1165,244 1210,242 1226,240'];
const HISTORY = ['119,685 145,687 200,680 260,688 300,690 350,683 400,675 460,667 500,660 550,665 610,672 655,695 710,695 740,715 800,720 830,712 860,722 940,706 1010,715 1080,738 1130,725 1180,730 1230,725 1290,745 1340,742 1400,728 1440,738 1500,730',
    '30,728 80,735 130,725 170,735 220,717 280,713 370,725 500,740 530,738 570,748 620,737 700,745 770,725 820,740 880,737 940,725 1000,740 1060,738 1140,737 1160,750 1200,762 1260,765 1330,755 1400,760 1460,770 1500,765',
    '20,765 50,775 90,767 130,775 180,777 250,772 310,777 330,793 390,797 440,788 500,792 560,787 640,793 720,783 780,782 830,775 880,780 960,772 1000,780 1060,778 1160,775 1220,778 1298,770'];

const FLOW = '238,258 243,240 248,252 252,215 256,212 257,280 260,328 264,315 275,310 280,318 290,335 300,315 305,318 312,298 320,312 325,298 333,340 340,330 350,325 362,335 392,337 397,355 408,370 418,355 433,352 436,310 445,320 450,338 470,333 480,345 495,340 508,355 520,345 540,342 560,333 590,340 600,355 625,368 652,362 656,355 660,388 663,372 680,383 692,395 705,392 730,385 738,376 752,385 770,388 778,412 790,432 794,420 810,430 815,468 822,435 838,415 850,420 890,428 895,450 902,455 907,430 917,440 920,520 925,532 926,433 935,480 955,515 967,570 969,630 978,655 983,643 990,668 998,680 1005,700 1020,695';

let width = BOARD;

function X(x) {
    return (x - LEFT) * width / BOARD;
}

// bars sit on whole pixels so that the wicks stay sharp
function barX(i) {
    return Math.floor(X(41.4 + STEP * i)) + 0.5;
}

function line(x1, y1, x2, y2, color, w, extra) {
    return `<line x1="${x1}" y1="${y1}" x2="${x2}" y2="${y2}" stroke="${color}" stroke-width="${w || 1}" ${extra || ''}/>`;
}

function poly(points, color, extra) {
    return `<polyline points="${points}" fill="none" stroke="${color}" ${extra || ''}/>`;
}

function mapPoints(str, fx, fy) {
    return str.split(' ').map(p => {
        const [x, y] = p.split(',').map(Number);
        return fx(x).toFixed(1) + ',' + fy(y).toFixed(1);
    }).join(' ');
}

// joins the 500px blocks of a series
function mapBlocks(blocks, top) {
    return blocks.map((b, n) => mapPoints(b, x => X((x + n * 1500) / 3), y => 640 + y / 3 - top)).join(' ');
}

function frame(h) {
    return `<rect x=".5" y=".5" width="${width - 1}" height="${h}" fill="none" stroke="#e6e9ec"/>`;
}

function drawKline() {
    let s = '';
    for (let i = 0; i < 22; i++) s += line(0, 12.5 + i * 26, width, 12.5 + i * 26, '#eff1f3');
    MONTHS.forEach(m => s += line(X(m[0]), 0, X(m[0]), 583, '#eff1f3'));
    s += frame(583);
    s += line(0, 205.5, X(1422), 205.5, '#c6a548', 1, 'stroke-dasharray="5 2"');

    let closes = '', bars = '';
    CANDLES.forEach((c, i) => {
        const up = c[0] === 'u';
        const [h, t, b, l] = c.slice(1).split(',').map(v => Number(v) + 190);
        const x = barX(i), color = up ? '#b02626' : '#2a8f1a';
        closes += `${x},${up ? t : b} `;
        if (up) {
            bars += line(x, h, x, t, color) + line(x, b, x, l, color);
            bars += `<rect x="${x - 1}" y="${t + 0.5}" width="2" height="${Math.max(b - t - 1, 1)}" fill="#fff" stroke="${color}"/>`;
        } else {
            bars += line(x, h, x, l, color);
            bars += `<rect x="${x - 1.5}" y="${t}" width="3" height="${Math.max(b - t, 1)}" fill="${color}"/>`;
        }
    });
    s += bars + `<polyline points="${closes}" fill="none" stroke="#777" stroke-opacity=".6"/>`;
    const y = v => v - TOP;
    s += poly(mapPoints(MA900, X, y), '#cc78cc');
    s += poly(mapPoints(MA55, X, y), '#e8a452');
    s += poly(mapPoints(MA120, X, y), '#dd6c70');
    s += poly(mapPoints(MA144, X, y), '#3aa6cc');
    s += line(X(97), 472, X(123), 477, '#e3e6ea') + line(X(1382), 184, X(1403), 189, '#e3e6ea');
    s += `<text x="${X(125)}" y="483">155.338</text><text x="${X(1339)}" y="186">252.810</text>`;
    s += `<g transform="translate(${X(1211)} 575)" fill="#fff" stroke="#3f94dc"><circle r="6.5"/><circle r="3.5"/><path d="M1 1l3 3"/></g>`;
    document.getElementById('kline').innerHTML = s;
}

// trend lines, arrows and text put on the chart by the user
function drawNotes() {
    const y = v => v - TOP;
    const pts = str => mapPoints(str, X, y);
    let s = '';
    s += line(X(39), y(230), X(1433), y(143), '#000', 2.3);
    s += line(X(39), y(399), X(1433), y(312), '#000', 2.3);
    s += line(X(39), y(569), X(1433), y(482), '#000', 2.3);
    s += poly(pts('1329,393 1414,253 1433,284 1466,169'), '#000', 'stroke-width="2"');
    ['1414,253 1402,258 1414,266', '1433,284 1420,279 1433,270', '1466,169 1456,178 1470,182'].forEach(p => {
        s += `<polygon points="${pts(p)}"/>`;
    });
    s += `<ellipse cx="${X(1400)}" cy="${y(308)}" rx="106" ry="5" fill="none" stroke="#000" stroke-width="4"/>`;
    s += `<text class="note-text" x="${X(655)}" y="${y(156)}">日线突破箱体压力，支撑<tspan>230</tspan>美元不破，维持多头结构等待加速</text>`;
    document.getElementById('notes').innerHTML = s;
}

function drawMacd() {
    let s = '';
    [23.5, 49.5, 75.5, 101.5, 127.5, 153.5].forEach(v => s += line(0, v, width, v, '#eff1f3'));
    MONTHS.forEach(m => {
        s += line(X(m[0]), 0, X(m[0]), 160, '#eff1f3');
        s += `<text x="${X(m[0]) + 1}" y="174">${m[1]}</text>`;
    });
    s += frame(160);
    HIST.forEach((v, i) => {
        if (!v) return;
        const x = barX(i);
        if (v > 0) s += line(x, 75.5, x, 75.5 - v / 3, '#fde6e6', 3);
        s += line(x, 75.5, x, 75.5 - v / 3, v > 0 ? '#a02626' : '#2a8a1a');
    });
    s += poly(mapBlocks(DIF, 678), '#e09a4a') + poly(mapBlocks(DEA, 678), '#3aa6cc');
    document.getElementById('macd').innerHTML = s;
}

function drawRange() {
    let s = `<polygon points="0,49 ${mapBlocks(HISTORY, 857)} ${width},49" fill="#eff3f6"/>`;
    const start = X(1249.5);
    s += `<rect x="${start}" y="0" width="${width - start}" height="49" fill="#dfe4ea" opacity=".45"/>`;
    for (let i = 0; i < 9; i++) {
        const x = X(86.5 + i * 165.6);
        s += line(x, 0, x, 49, '#e3e6ea');
        s += `<text x="${x}" y="48" text-anchor="middle">${2014 + i}</text>`;
    }
    s += frame(49);
    s += `<path d="M${start + 6} 25.500h-5m2-2l-2 2 2 2M${width - 6} 25.500h5m-2-2l2 2-2 2" fill="none" stroke="#71859c"/>`;
    document.getElementById('range').innerHTML = s;
}

function drawFlow() {
    let s = '';
    [7.5, 68.5, 129.5, 190.5].forEach(y => s += line(75, y, 340, y, '#eceff2'));
    ['09:30', '10:30', '11:30', '12:30', '13:30', '14:30'].forEach((t, i) => {
        const x = 75.5 + Math.round(i * 40.7);
        s += line(x, 7, x, 190, '#eceff2') + `<text x="${x}" y="205" text-anchor="middle">${t}</text>`;
    });
    s += '<text x="310" y="205">16:00</text>';
    [['366.26万', 20], ['-303.02万', 73], ['-972.31万', 134], ['-1641.59万', 187]].forEach(l => {
        s += `<text x="70" y="${l[1]}" text-anchor="end">${l[0]}</text>`;
    });
    s += poly(mapPoints(FLOW, x => x / 3 - 4, y => y / 3 - 63), '#d9a336');
    document.getElementById('flow').innerHTML = s;
}

function drawPie() {
    const parts = [[443.74, '#047a2c'], [2533.19, '#0c953c'], [3631.06, '#13c350'],
        [2516.69, '#fe4244'], [1698.85, '#c92428'], [750.86, '#ac1114']];
    const total = parts.reduce((a, p) => a + p[0], 0);
    let s = '', a = -Math.PI / 2;
    parts.forEach(p => {
        const b = a + p[0] / total * Math.PI * 2;
        s += `<path d="M0 0L${39.5 * Math.cos(a)} ${39.5 * Math.sin(a)}A39.5 39.5 0 0 1 ${39.5 * Math.cos(b)} ${39.5 * Math.sin(b)}z" fill="${p[1]}" stroke="#fff"/>`;
        a = b;
    });
    s += '<text x="20" y="-10">22%</text><text x="13" y="27">31%</text><text x="-24" y="16">22%</text>';
    document.getElementById('pie').innerHTML = s;
}

function drawAxis() {
    const prices = ['316.301', '307.151', '298.002', '288.853', '279.703', '270.554', '261.405', '252.255', '243.106', '233.956', '224.807',
        '215.658', '206.508', '197.359', '188.210', '179.060', '169.911', '160.762', '151.612', '142.463', '133.313', '124.164'];
    const html = prices.map(p => `<span>${p}</span>`).join('') + '<span class="now">248.540</span>';
    document.getElementById('axisLeft').innerHTML = html;
    document.getElementById('axisRight').innerHTML = html;
}

function drawAll() {
    width = document.getElementById('kline').clientWidth;
    drawKline();
    drawNotes();
    drawMacd();
    drawRange();
}

drawAxis();
drawFlow();
drawPie();
drawAll();
window.addEventListener('resize', drawAll);
```
